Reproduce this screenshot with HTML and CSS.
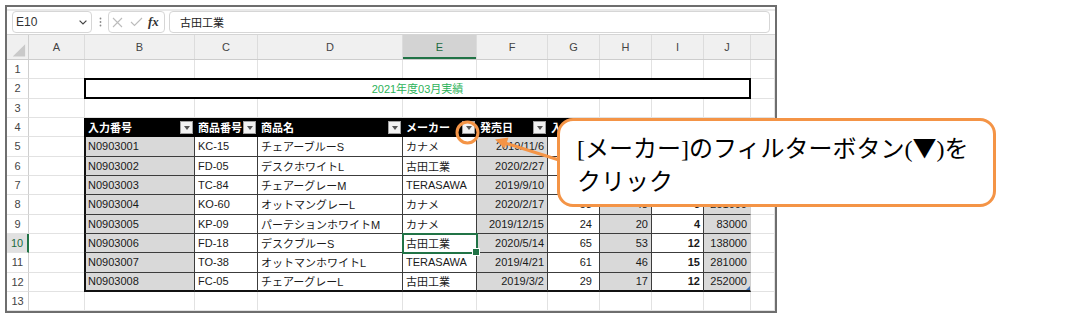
FILE: index.html
```html
<!DOCTYPE html>
<html lang="ja">
<head>
<meta charset="utf-8">
<link rel="stylesheet" href="styles.css">
</head>
<body>
<div class="frame">
  <div class="fbar">
    <div class="namebox"><span>E10</span><svg class="chev" width="8" height="5" viewBox="0 0 8 5"><path d="M0.6 0.6 L4 4 L7.4 0.6" fill="none" stroke="#444" stroke-width="1.2"/></svg></div>
    <div class="dots"><svg width="3" height="10" viewBox="0 0 3 10"><circle cx="1.5" cy="1.5" r="0.9" fill="#8a8a8a"/><circle cx="1.5" cy="5" r="0.9" fill="#8a8a8a"/><circle cx="1.5" cy="8.5" r="0.9" fill="#8a8a8a"/></svg></div>
    <div class="fxbox">
      <svg class="ix" width="11" height="11" viewBox="0 0 11 11"><path d="M1 1L10 10M10 1L1 10" stroke="#bcbcbc" stroke-width="1.1"/></svg>
      <svg class="ick" width="13" height="10" viewBox="0 0 13 10"><path d="M1 5L4.5 8.5L12 1" fill="none" stroke="#bcbcbc" stroke-width="1.1"/></svg>
      <span class="fx">fx</span>
    </div>
    <div class="finput">古田工業</div>
  </div>
  <div class="sheet">
    <div class="row hdr">
      <div class="ch corner"><svg width="22" height="24" viewBox="0 0 22 24"><path d="M6 22L19 9L19 22Z" fill="#c9c9c9"/></svg></div>
      <div class="ch">A</div><div class="ch">B</div><div class="ch">C</div><div class="ch">D</div><div class="ch chs">E</div><div class="ch">F</div><div class="ch">G</div><div class="ch">H</div><div class="ch">I</div><div class="ch">J</div><div class="ch last-ch"></div>
    </div>
    <div class="row"><div class="c rh">1</div><div class="c"></div><div class="c"></div><div class="c"></div><div class="c"></div><div class="c"></div><div class="c"></div><div class="c"></div><div class="c"></div><div class="c"></div><div class="c"></div><div class="c"></div></div>
    <div class="row"><div class="c rh">2</div><div class="c"></div><div class="c title">2021年度03月実績</div><div class="c"></div></div>
    <div class="row"><div class="c rh">3</div><div class="c"></div><div class="c"></div><div class="c"></div><div class="c"></div><div class="c"></div><div class="c"></div><div class="c"></div><div class="c"></div><div class="c"></div><div class="c"></div><div class="c"></div></div>
    <div class="row"><div class="c rh">4</div><div class="c"></div>
      <div class="c th b1h">入力番号<span class="fb"></span></div>
      <div class="c th">商品番号<span class="fb"></span></div>
      <div class="c th">商品名<span class="fb"></span></div>
      <div class="c th">メーカー<span class="fb"></span></div>
      <div class="c th">発売日<span class="fb"></span></div>
      <div class="c th">入<span class="fb"></span></div>
      <div class="c th"><span class="fb"></span></div>
      <div class="c th"><span class="fb"></span></div>
      <div class="c th"><span class="fb"></span></div>
      <div class="c"></div></div>
    <div class="row"><div class="c rh">5</div><div class="c"></div><div class="c t b1 g">N0903001</div><div class="c t">KC-15</div><div class="c t">チェアーブルーS</div><div class="c t">カナメ</div><div class="c t g r">2019/11/6</div><div class="c t r pg"></div><div class="c t g r"></div><div class="c t r bd"></div><div class="c t g r tj"></div><div class="c"></div></div>
    <div class="row"><div class="c rh">6</div><div class="c"></div><div class="c t b1 g">N0903002</div><div class="c t">FD-05</div><div class="c t">デスクホワイトL</div><div class="c t">古田工業</div><div class="c t g r">2020/2/27</div><div class="c t r pg"></div><div class="c t g r"></div><div class="c t r bd"></div><div class="c t g r tj"></div><div class="c"></div></div>
    <div class="row"><div class="c rh">7</div><div class="c"></div><div class="c t b1 g">N0903003</div><div class="c t">TC-84</div><div class="c t">チェアーグレーM</div><div class="c t">TERASAWA</div><div class="c t g r">2019/9/10</div><div class="c t r pg"></div><div class="c t g r"></div><div class="c t r bd"></div><div class="c t g r tj"></div><div class="c"></div></div>
    <div class="row"><div class="c rh">8</div><div class="c"></div><div class="c t b1 g">N0903004</div><div class="c t">KO-60</div><div class="c t">オットマングレーL</div><div class="c t">カナメ</div><div class="c t g r">2020/2/17</div><div class="c t r pg">53</div><div class="c t g r">48</div><div class="c t r bd">5</div><div class="c t g r tj">251000</div><div class="c"></div></div>
    <div class="row"><div class="c rh">9</div><div class="c"></div><div class="c t b1 g">N0903005</div><div class="c t">KP-09</div><div class="c t">パーテションホワイトM</div><div class="c t">カナメ</div><div class="c t g r">2019/12/15</div><div class="c t r pg">24</div><div class="c t g r">20</div><div class="c t r bd">4</div><div class="c t g r tj">83000</div><div class="c"></div></div>
    <div class="row"><div class="c rh rsel">10</div><div class="c"></div><div class="c t b1 g">N0903006</div><div class="c t">FD-18</div><div class="c t">デスクブルーS</div><div class="c t sel">古田工業</div><div class="c t g r">2020/5/14</div><div class="c t r pg">65</div><div class="c t g r">53</div><div class="c t r bd">12</div><div class="c t g r tj">138000</div><div class="c"></div></div>
    <div class="row"><div class="c rh">11</div><div class="c"></div><div class="c t b1 g">N0903007</div><div class="c t">TO-38</div><div class="c t">オットマンホワイトL</div><div class="c t">TERASAWA</div><div class="c t g r">2019/4/21</div><div class="c t r pg">61</div><div class="c t g r">46</div><div class="c t r bd">15</div><div class="c t g r tj">281000</div><div class="c"></div></div>
    <div class="row"><div class="c rh">12</div><div class="c"></div><div class="c t b1 g lst">N0903008</div><div class="c t lst">FC-05</div><div class="c t lst">チェアーグレーL</div><div class="c t lst">古田工業</div><div class="c t g r lst">2019/3/2</div><div class="c t r pg lst">29</div><div class="c t g r lst">17</div><div class="c t r bd lst">12</div><div class="c t g r tj lst corner-mark">252000</div><div class="c"></div></div>
    <div class="row"><div class="c rh">13</div><div class="c"></div><div class="c"></div><div class="c"></div><div class="c"></div><div class="c"></div><div class="c"></div><div class="c"></div><div class="c"></div><div class="c"></div><div class="c"></div><div class="c"></div></div>
  </div>
</div>
<svg class="overlay" width="1078" height="316" viewBox="0 0 1078 316">
  <circle cx="467.5" cy="132.5" r="10.5" fill="none" stroke="#f49446" stroke-width="3"/>
  <path d="M559 160 L505 143" stroke="#f49446" stroke-width="3" fill="none"/>
  <path d="M495 139.5 L508.5 137.5 L504.8 148.5 Z" fill="#f49446"/>
</svg>
<div class="callout">[メーカー]のフィルターボタン(<span class="tri">▼</span>)を<br>クリック</div>
</body>
</html>
```
FILE: styles.css
```css
* { box-sizing: border-box; }
html, body { margin: 0; }
body {
  width: 1078px;
  height: 316px;
  overflow: hidden;
  position: relative;
  background: #fff;
  padding: 5px 0 0 5px;
  font-family: "Liberation Sans", "Noto Sans CJK JP", sans-serif;
}
.frame {
  width: 772px;
  border: 2px solid #6e6e6e;
  display: flex;
  flex-direction: column;
  background: #fff;
}
.fbar {
  display: flex;
  align-items: stretch;
  margin-top: 2px;
  border-top: 2px solid #e9e9e9;
  height: 25px;
  padding: 0 5px 1px 5px;
}
.namebox, .fxbox, .finput {
  border: 1px solid #d6d6d6;
  border-radius: 4px;
  display: flex;
  align-items: center;
  background: #fff;
}
.namebox {
  width: 80px;
  padding: 0 4px 0 3px;
  font-size: 12px;
  color: #333;
}
.chev { margin-left: auto; }
.dots {
  width: 16px;
  display: flex;
  align-items: center;
  justify-content: center;
}
.fxbox {
  width: 57px;
  padding-left: 3px;
}
.ick { margin-left: 7px; }
.fx {
  margin-left: 5px;
  font-family: "Liberation Serif", serif;
  font-style: italic;
  font-weight: bold;
  font-size: 13px;
  color: #333;
}
.finput {
  flex: 1;
  margin-left: 4px;
  padding-left: 10px;
  font-size: 11px;
  color: #222;
}
.sheet {
  display: flex;
  flex-direction: column;
}
.row {
  display: grid;
  grid-template-columns: 22px 56px 110px 63px 145px 74px 71px 52px 52px 52px 47px 1fr;
  height: 19.333px;
}
.hdr {
  height: 26px;
  border-top: 1px solid #d5d5d5;
  border-bottom: 1px solid #cdcdcd;
  background: #f0f0f0;
}
.ch {
  border-right: 1px solid #dcdcdc;
  display: flex;
  align-items: center;
  justify-content: center;
  font-size: 11px;
  color: #444;
}
.corner { border-right-color: #cfcfcf; align-items: flex-start; }
.last-ch { border-right: none; }
.chs {
  background: #d3d3d3;
  color: #1e6b41;
  box-shadow: inset 0 -2px 0 #217346;
}
.c {
  border-right: 1px solid #e2e2e2;
  border-bottom: 1px solid #e2e2e2;
  padding: 0 3px;
  display: flex;
  align-items: center;
  white-space: nowrap;
  overflow: hidden;
  font-size: 11px;
  color: #1a1a1a;
}
.rh {
  justify-content: center;
  color: #444;
  border-right-color: #cfcfcf;
  padding: 0;
}
.rsel {
  background: #e1e1e1;
  color: #1e6b41;
  border-right: 2px solid #217346;
}
.title {
  grid-column: 3 / 12;
  margin: -1px 0 0 -1px;
  border: 2px solid #000;
  justify-content: center;
  color: #2db35a;
  overflow: visible;
}
.th {
  background: #000;
  color: #fff;
  font-weight: bold;
  border-right-color: #000;
  border-bottom-color: #000;
}
.b1h { margin-left: -1px; padding-left: 4px; }
.fb {
  margin-left: auto;
  margin-right: -2px;
  width: 13px;
  height: 13px;
  flex: none;
  background: #f2f2f2;
  border: 1px solid #a0a0a0;
  display: flex;
  align-items: center;
  justify-content: center;
}
.fb::after {
  content: "";
  border-left: 3px solid transparent;
  border-right: 3px solid transparent;
  border-top: 4px solid #555;
  margin-top: 1px;
}
.t {
  border-right-color: #3c3c3c;
  border-bottom-color: #3c3c3c;
}
.b1 {
  margin-left: -1px;
  border-left: 2px solid #111;
  padding-left: 2px;
}
.g { background: #d9d9d9; }
.r { justify-content: flex-end; }
.pg { padding-right: 7px; }
.bd { font-weight: bold; }
.tj { border-right-color: #d0d0d0; }
.lst { border-bottom: 2px solid #111; }
.corner-mark { position: relative; }
.corner-mark::after {
  content: "";
  position: absolute;
  right: 0;
  bottom: 0;
  border-left: 4px solid transparent;
  border-bottom: 4px solid #3b6fb6;
}
.sel {
  position: relative;
  z-index: 1;
  overflow: visible;
  outline: 2px solid #217346;
  outline-offset: -1px;
}
.sel::after {
  content: "";
  position: absolute;
  right: -4px;
  bottom: -4px;
  width: 6px;
  height: 6px;
  background: #217346;
  border: 1px solid #fff;
}
.overlay {
  position: absolute;
  left: 0;
  top: 0;
  z-index: 5;
  pointer-events: none;
}
.callout {
  position: absolute;
  left: 557px;
  top: 118px;
  width: 439px;
  height: 89px;
  z-index: 6;
  border: 3px solid #f49446;
  border-radius: 16px;
  background: #fff;
  padding: 9px 0 0 17px;
  font-family: "Liberation Serif", "Noto Sans CJK JP", serif;
  font-size: 24px;
  line-height: 33px;
  color: #000;
  white-space: nowrap;
}
.tri {
  font-family: "Noto Sans CJK JP", sans-serif;
}
```
